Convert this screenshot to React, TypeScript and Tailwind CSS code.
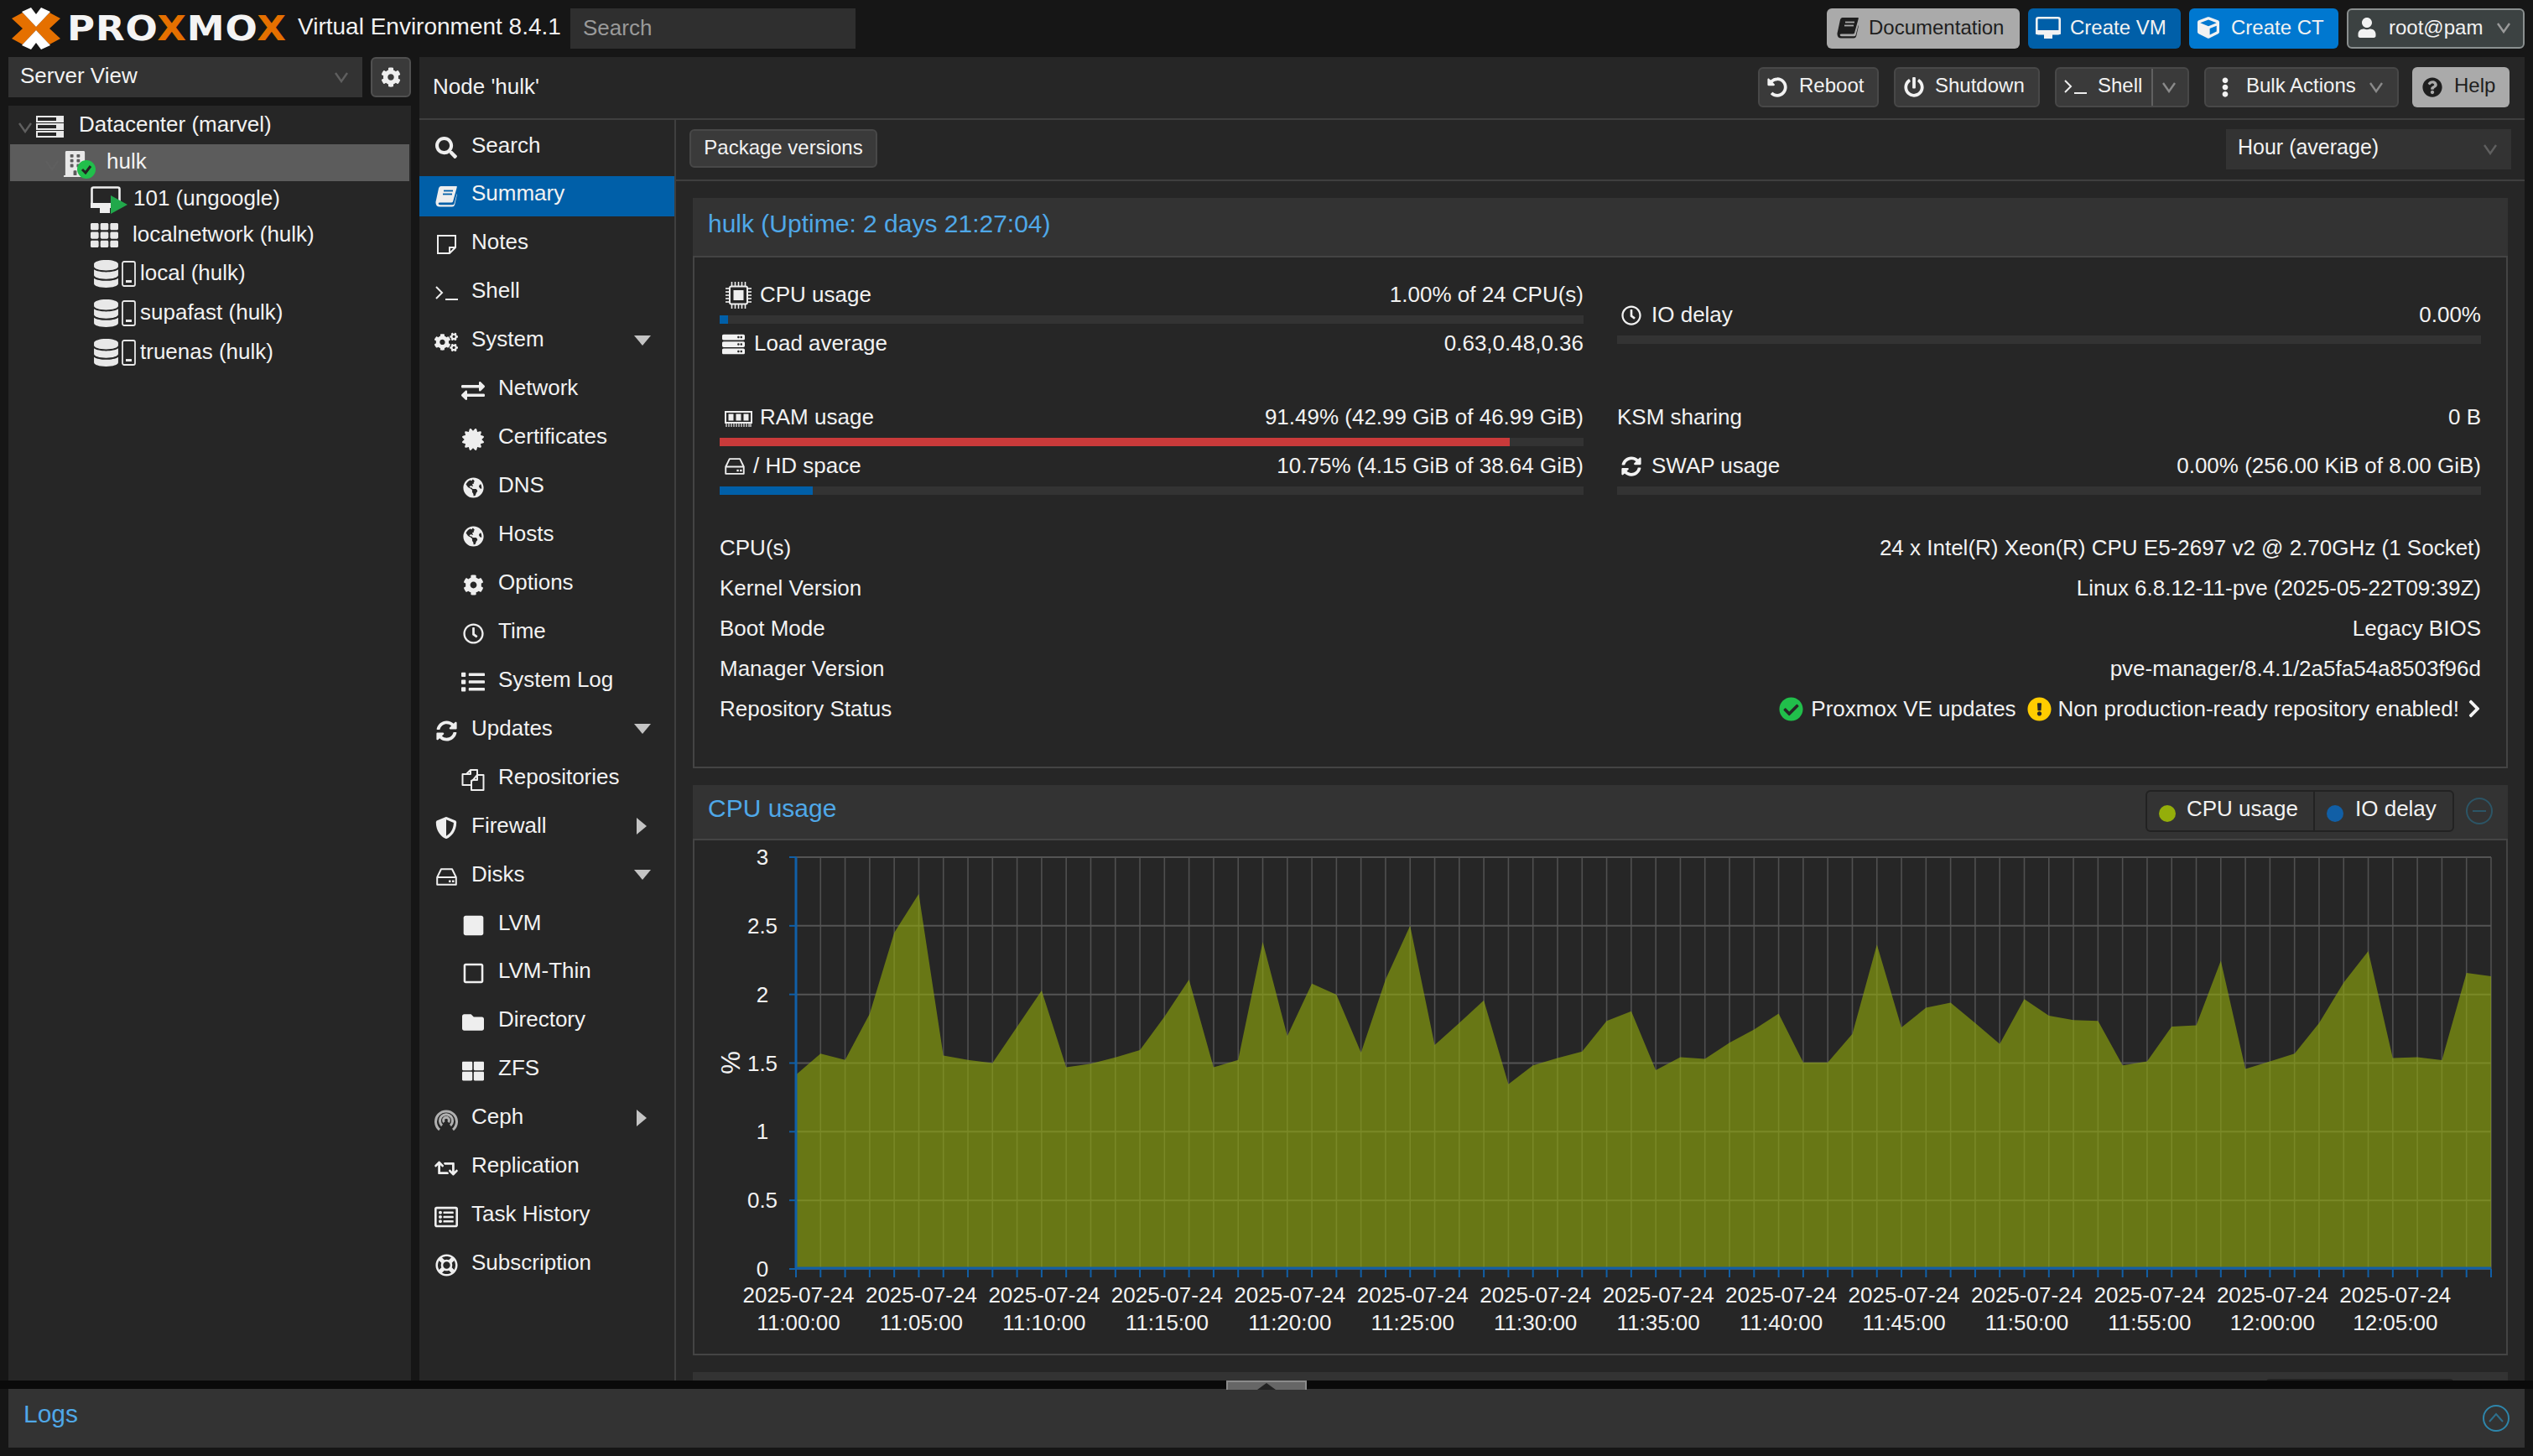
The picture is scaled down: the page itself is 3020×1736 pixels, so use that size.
import React from "react";
import {
  FaSearch, FaCogs, FaExchangeAlt, FaCertificate, FaGlobeAmericas, FaCog,
  FaRegClock, FaList, FaSyncAlt, FaShieldAlt, FaSquare, FaRegSquare, FaFolder, FaThLarge,
  FaRetweet, FaRegListAlt, FaRegLifeRing, FaCube, FaUser, FaUndoAlt, FaPowerOff, FaEllipsisV,
  FaQuestionCircle, FaBuilding, FaTh, FaDatabase, FaCheckCircle, FaExclamationCircle, FaChevronRight,
  FaServer,
} from "react-icons/fa";

function Chev({ c = "#9a9a9a" }: { c?: string }) {
  return (
    <svg width="18" height="14" viewBox="0 0 18 14" className="shrink-0">
      <polyline points="2,2 9,12 16,2" fill="none" stroke={c} strokeWidth="2.4" />
    </svg>
  );
}

function BookIcon({ c = "#eeeeee", bg = "#005fa8", size = 26 }: { c?: string; bg?: string; size?: number }) {
  return (
    <svg width={size} height={size} viewBox="0 0 26 25">
      <path
        d="M6.5 0.5 H25.5 Q26 0.5 25.7 2 L21 19 Q20.5 20 19 20 H5.5 Q3.5 20 3.7 21.3 Q4 22.8 6 22.8 H20.5 Q22 22.8 22.5 21.5 L25.8 9 V11 L23.2 22.5 Q22.5 25 20 25 H5 Q1 25 0.5 20.5 Q0.3 19 1 17 L4 3 Q4.6 0.5 6.5 0.5 Z"
        fill={c}
      />
      <line x1="10" x2="21" y1="6" y2="6" stroke={bg} strokeWidth="1.8" />
      <line x1="9" x2="20" y1="10" y2="10" stroke={bg} strokeWidth="1.8" />
    </svg>
  );
}

function SummaryBook() {
  return <BookIcon />;
}

function NoteIcon() {
  return (
    <svg width="25" height="25" viewBox="0 0 25 25">
      <path d="M2 2 H23 V16 L16 23 H2 Z M23 16 H16 V23" fill="none" stroke="#eeeeee" strokeWidth="2" />
    </svg>
  );
}

function TermIcon() {
  return (
    <svg width="27" height="17" viewBox="0 0 27 17">
      <polyline points="1,1 8,8 1,15" fill="none" stroke="#eeeeee" strokeWidth="2" />
      <line x1="12" x2="27" y1="16" y2="16" stroke="#eeeeee" strokeWidth="2" />
    </svg>
  );
}

function HddIcon({ w = 25, h = 21 }: { w?: number; h?: number }) {
  return (
    <svg width={w} height={h} viewBox="0 0 25 21">
      <path d="M6 1.2 H19 L23.8 11 V19.8 H1.2 V11 Z M1.2 11 H23.8" fill="none" stroke="#eeeeee" strokeWidth="2" strokeLinejoin="round" />
      <rect x="15" y="14.5" width="2.5" height="2.5" fill="#eeeeee" />
      <rect x="19" y="14.5" width="2.5" height="2.5" fill="#eeeeee" />
    </svg>
  );
}

function FilesIcon() {
  return (
    <svg width="28" height="27" viewBox="0 0 28 27">
      <g fill="none" stroke="#eeeeee" strokeWidth="2" strokeLinejoin="round">
        <path d="M6 7 L11 2 H19 V8 M11 2 V7 H6 M6 7 H1.5 V20 H12" />
        <path d="M14 14 L19 8 H26.5 V26 H12 V15 Z M19 8 V14 H13" />
      </g>
    </svg>
  );
}

function ChipIcon() {
  return (
    <svg width="33" height="32" viewBox="0 0 33 32">
      <rect x="6" y="5.5" width="21" height="21" rx="2" fill="none" stroke="#eeeeee" strokeWidth="2" />
      <rect x="10.5" y="10" width="12" height="12" fill="#eeeeee" />
      <g stroke="#eeeeee" strokeWidth="1.6">
        {[9, 13, 17, 21, 25].map((p) => (
          <g key={p}>
            <line x1={p - 0.5} x2={p - 0.5} y1="0" y2="5" />
            <line x1={p - 0.5} x2={p - 0.5} y1="27" y2="32" />
            <line x1="1" x2="6" y1={p - 1} y2={p - 1} />
            <line x1="27" x2="32" y1={p - 1} y2={p - 1} />
          </g>
        ))}
      </g>
    </svg>
  );
}

function RamIcon() {
  return (
    <svg width="33" height="19" viewBox="0 0 33 19">
      <rect x="1" y="1" width="31" height="13" fill="none" stroke="#eeeeee" strokeWidth="2" />
      <rect x="4.5" y="3.5" width="6" height="8" fill="#eeeeee" />
      <rect x="13.5" y="3.5" width="6" height="8" fill="#eeeeee" />
      <rect x="22.5" y="3.5" width="6" height="8" fill="#eeeeee" />
      <g stroke="#eeeeee" strokeWidth="1.2">
        {[2, 5, 8, 11, 14, 17, 20, 23, 26, 29, 31].map((p) => (
          <line key={p} x1={p} x2={p} y1="14" y2="19" />
        ))}
      </g>
    </svg>
  );
}

function VmIcon() {
  return (
    <svg width="30" height="27" viewBox="0 0 30 27" className="shrink-0">
      <rect x="1.3" y="1.3" width="27.4" height="19" rx="2" fill="none" stroke="#f2f2f2" strokeWidth="2.6" />
      <rect x="0" y="16" width="30" height="5" rx="1" fill="#f2f2f2" />
      <rect x="10" y="21" width="10" height="5" fill="#f2f2f2" />
    </svg>
  );
}

function Logo() {
  return (
    <div className="flex items-center w-[355px] shrink-0 pl-[14px]">
      <svg width="58" height="50" viewBox="14 8 58 50" className="shrink-0">
        <polygon points="14,21 27,14 45,33 27,52 14,45 27,33" fill="#e57000" />
        <polygon points="72,21 59,14 41,33 59,52 72,45 59,33" fill="#e57000" />
        <polygon points="26,13 37,8 43,16 49,8 60,13 43,31" fill="#ffffff" />
        <polygon points="26,53 37,58 43,50 49,58 60,53 43,35" fill="#ffffff" />
      </svg>
      <span className="ml-[8px] inline-block origin-left scale-x-[1.1] [font-family:'DejaVu_Sans',sans-serif] font-bold text-[41px] leading-[41px] tracking-[0.8px] text-[#f4f4f4] whitespace-nowrap">
        PRO<span className="text-[#e57000]">X</span>MO<span className="text-[#e57000]">X</span>
      </span>
    </div>
  );
}

function TopBar() {
  return (
    <div className="h-[68px] flex items-center pr-[10px] shrink-0">
      <Logo />
      <span className="text-[28px] text-[#f2f2f2] whitespace-nowrap w-[325px] pb-[4px]">Virtual Environment 8.4.1</span>
      <div className="w-[340px] h-[48px] bg-[#2f2f2f] flex items-center pl-[15px] text-[26px] text-[#9a9a9a] pb-[2px]">Search</div>
      <div className="ml-auto flex gap-[10px] text-[24px]">
        <div className="w-[230px] h-[48px] rounded-[6px] bg-[#aaaaaa] text-[#1e1e1e] flex items-center pl-[12px] gap-[12px] pb-[2px]">
          <BookIcon c="#1e1e1e" bg="#aaaaaa" /> Documentation
        </div>
        <div className="w-[182px] h-[48px] rounded-[6px] bg-[#005fa8] text-[#f2f2f2] flex items-center pl-[9px] gap-[11px] pb-[2px]">
          <VmIcon /> Create VM
        </div>
        <div className="w-[178px] h-[48px] rounded-[6px] bg-[#0078d0] text-[#f2f2f2] flex items-center pl-[10px] gap-[14px] pb-[2px]">
          <FaCube size={26} /> Create CT
        </div>
        <div className="w-[212px] h-[48px] rounded-[6px] bg-[#3c4242] border-2 border-[#8a8f8f] text-[#f2f2f2] flex items-center pl-[10px] pb-[2px]">
          <FaUser size={24} />
          <span className="ml-[14px] w-[128px]">root@pam</span>
          <Chev />
        </div>
      </div>
    </div>
  );
}

function DbIcon() {
  return (
    <div className="flex items-center w-[52px] shrink-0">
      <FaDatabase size={33} color="#e8e8e8" />
      <svg width="17" height="31" viewBox="0 0 17 31" className="ml-[2px]">
        <rect x="1" y="1" width="15" height="29" rx="2" fill="none" stroke="#e8e8e8" strokeWidth="1.8" />
        <rect x="5" y="23" width="7" height="3" fill="#e8e8e8" />
      </svg>
    </div>
  );
}

function TreeRow({ h, pl, active, chev, icon, gap, tp = 3, children }: any) {
  return (
    <div
      className={`flex items-center mx-[2px] ${active ? "bg-[#5c5c5c]" : ""}`}
      style={{ height: h, paddingLeft: pl }}
    >
      {chev && <span className="mr-[4px] mt-[6px] flex"><Chev c="#5f5f5f" /></span>}
      {icon}
      <span className="whitespace-nowrap" style={{ marginLeft: gap, paddingBottom: tp }}>{children}</span>
    </div>
  );
}

function LeftColumn() {
  return (
    <div className="w-[480px] shrink-0 flex flex-col">
      <div className="flex h-[48px] justify-between">
        <div className="w-[422px] h-[48px] bg-[#333333] flex items-center pl-[14px] pr-[16px] justify-between">
          <span className="pb-[4px]">Server View</span>
          <Chev c="#5f5f5f" />
        </div>
        <div className="w-[48px] h-[48px] rounded-[6px] bg-[#3a3a3a] border-2 border-[#505050] flex items-center justify-center">
          <FaCog size={24} color="#eeeeee" />
        </div>
      </div>
      <div className="mt-[10px] flex-1 bg-[#262626] text-[26px]">
        <TreeRow
          h={46}
          pl={9}
          chev
          gap={18}
          tp={1}
          icon={
            <svg width="33" height="26" viewBox="0 0 33 26" className="shrink-0 mt-[4px]">
              <g fill="none" stroke="#e8e8e8" strokeWidth="2">
                <rect x="1" y="1" width="31" height="6" />
                <rect x="1" y="10" width="31" height="6" />
                <rect x="1" y="19" width="31" height="6" />
              </g>
              <rect x="24" y="1" width="8" height="6" fill="#e8e8e8" />
              <rect x="24" y="10" width="8" height="6" fill="#e8e8e8" />
              <rect x="24" y="19" width="8" height="6" fill="#e8e8e8" />
            </svg>
          }
        >
          Datacenter (marvel)
        </TreeRow>
        <TreeRow
          h={44}
          pl={41}
          active
          chev
          gap={20}
          icon={
            <div className="relative w-[32px] h-[32px] shrink-0 mt-[4px] -ml-[1px] mr-[1px]">
              <FaBuilding size={31} color="#e8e8e8" />
              <div className="absolute left-[18px] top-[11px] w-[22px] h-[22px] rounded-full bg-[#21bf4b] flex items-center justify-center">
                <svg width="14" height="12" viewBox="0 0 14 12"><polyline points="2,6 6,10 12,2" fill="none" stroke="#222222" strokeWidth="3" /></svg>
              </div>
            </div>
          }
        >
          hulk
        </TreeRow>
        <TreeRow
          h={42}
          pl={96}
          gap={7}
          tp={2}
          icon={
            <svg width="44" height="34" viewBox="0 0 44 34" className="shrink-0 mt-[4px]">
              <rect x="1.5" y="1.5" width="33" height="22" rx="2" fill="none" stroke="#eeeeee" strokeWidth="2.6" />
              <rect x="0" y="20" width="24" height="6" fill="#eeeeee" />
              <rect x="11" y="26" width="12" height="6" fill="#eeeeee" />
              <polygon points="24,11 44,22 24,33" fill="#21a84b" />
            </svg>
          }
        >
          101 (ungoogle)
        </TreeRow>
        <TreeRow h={45} pl={96} gap={17} icon={<FaTh size={33} color="#e8e8e8" />}>
          localnetwork (hulk)
        </TreeRow>
        <TreeRow h={47} pl={98} gap={5} icon={<DbIcon />}>local (hulk)</TreeRow>
        <TreeRow h={47} pl={98} gap={5} tp={2} icon={<DbIcon />}>supafast (hulk)</TreeRow>
        <TreeRow h={47} pl={98} gap={5} tp={2} icon={<DbIcon />}>truenas (hulk)</TreeRow>
      </div>
    </div>
  );
}

function CephIcon() {
  return (
    <svg width="28" height="28" viewBox="0 0 28 28">
      <g fill="none" stroke="#b0b0b0" strokeWidth="3">
        <path d="M6,26 A12.5,12.5 0 1 1 22,26" />
        <path d="M9,21 A7.6,7.6 0 1 1 19,21" />
        <path d="M11.5,17 A3.4,3.4 0 1 1 16.5,17" />
      </g>
    </svg>
  );
}

const HddMenu = () => <HddIcon />;

const menu: { t: string; I: any; s?: number; sub?: boolean; active?: boolean; arrow?: "down" | "right" }[] = [
  { t: "Search", I: FaSearch, s: 26 },
  { t: "Summary", I: SummaryBook, active: true },
  { t: "Notes", I: NoteIcon },
  { t: "Shell", I: TermIcon },
  { t: "System", I: FaCogs, s: 30, arrow: "down" },
  { t: "Network", I: FaExchangeAlt, s: 28, sub: true },
  { t: "Certificates", I: FaCertificate, s: 26, sub: true },
  { t: "DNS", I: FaGlobeAmericas, s: 25, sub: true },
  { t: "Hosts", I: FaGlobeAmericas, s: 25, sub: true },
  { t: "Options", I: FaCog, s: 25, sub: true },
  { t: "Time", I: FaRegClock, s: 25, sub: true },
  { t: "System Log", I: FaList, s: 28, sub: true },
  { t: "Updates", I: FaSyncAlt, s: 25, arrow: "down" },
  { t: "Repositories", I: FilesIcon, sub: true },
  { t: "Firewall", I: FaShieldAlt, s: 26, arrow: "right" },
  { t: "Disks", I: HddMenu, arrow: "down" },
  { t: "LVM", I: FaSquare, s: 27, sub: true },
  { t: "LVM-Thin", I: FaRegSquare, s: 27, sub: true },
  { t: "Directory", I: FaFolder, s: 26, sub: true },
  { t: "ZFS", I: FaThLarge, s: 26, sub: true },
  { t: "Ceph", I: CephIcon, arrow: "right" },
  { t: "Replication", I: FaRetweet, s: 30 },
  { t: "Task History", I: FaRegListAlt, s: 28 },
  { t: "Subscription", I: FaRegLifeRing, s: 27 },
];

function Menu() {
  return (
    <div className="w-[306px] shrink-0 border-r-2 border-[#3f3f3f] flex flex-col gap-[9.95px] pt-[9px] text-[26px] overflow-hidden">
      {menu.map((m) => (
        <div
          key={m.t}
          className={`flex items-center h-[48px] shrink-0 gap-[16px] ${m.active ? "bg-[#005fa8]" : ""} ${m.sub ? "pl-[50px]" : "pl-[18px]"}`}
        >
          <span className="w-[28px] flex justify-center text-[#eeeeee]">
            <m.I size={m.s} />
          </span>
          <span className="pb-[6px]">{m.t}</span>
          {m.arrow === "down" && (
            <svg width="20" height="12" viewBox="0 0 20 12" className="ml-auto mr-[28px] mb-[4px]">
              <polygon points="0,0 20,0 10,12" fill="#c4c4c4" />
            </svg>
          )}
          {m.arrow === "right" && (
            <svg width="12" height="20" viewBox="0 0 12 20" className="ml-auto mr-[33px] mb-[4px]">
              <polygon points="0,0 12,10 0,20" fill="#c4c4c4" />
            </svg>
          )}
        </div>
      ))}
    </div>
  );
}

function Bar({ pct, c }: { pct: number; c?: string }) {
  return (
    <div className="h-[10px] mt-[6px] bg-[#333333]">
      {pct > 0 && <div className="h-full" style={{ width: `${pct}%`, background: c ?? "#005fa8" }} />}
    </div>
  );
}

function Stat({ icon, label, value, pct, c, gap = 8 }: any) {
  return (
    <div className="h-[58px]">
      <div className="h-[36px] flex items-center justify-between">
        <div className="flex items-center">
          {icon}
          <span className="pb-[2px]" style={{ marginLeft: gap }}>{label}</span>
        </div>
        <span className="pb-[2px]">{value}</span>
      </div>
      {pct !== undefined && <Bar pct={pct} c={c} />}
    </div>
  );
}

function InfoRow({ k, children }: { k: string; children: React.ReactNode }) {
  return (
    <div className="h-[48px] flex items-center justify-between">
      <span className="pb-[2px]">{k}</span>
      <div className="flex items-center pb-[2px]">{children}</div>
    </div>
  );
}

function SummaryPanel() {
  return (
    <div className="h-[680px] shrink-0 flex flex-col">
      <div className="h-[71px] bg-[#333333] border-b-2 border-[#444444] flex items-center pl-[18px] text-[30px] text-[#4fa8e8] pb-[8px]">
        hulk (Uptime: 2 days 21:27:04)
      </div>
      <div className="flex-1 border-2 border-t-0 border-[#444444] px-[30px] pt-[27px] text-[#f2f2f2] text-[26px]">
        <div className="grid grid-cols-2 gap-x-[40px]">
          <div className="h-[146px]">
            <Stat icon={<span className="ml-[6px] flex"><ChipIcon /></span>} label="CPU usage" value="1.00% of 24 CPU(s)" pct={1} gap={9} />
            <Stat icon={<span className="ml-[3px]"><FaServer size={27} /></span>} label="Load average" value="0.63,0.48,0.36" gap={11} />
          </div>
          <div className="h-[146px] pt-[24px]">
            <Stat icon={<span className="ml-[5px]"><FaRegClock size={24} /></span>} label="IO delay" value="0.00%" pct={0} gap={12} />
          </div>
          <div>
            <Stat icon={<span className="ml-[6px] mt-[2px] flex"><RamIcon /></span>} label="RAM usage" value="91.49% (42.99 GiB of 46.99 GiB)" pct={91.49} c="#c93a3a" gap={9} />
            <Stat icon={<span className="ml-[6px] flex"><HddIcon w={24} h={20} /></span>} label="/ HD space" value="10.75% (4.15 GiB of 38.64 GiB)" pct={10.75} gap={10} />
          </div>
          <div>
            <Stat icon={null} label="KSM sharing" value="0 B" gap={0} />
            <Stat icon={<span className="ml-[5px]"><FaSyncAlt size={24} /></span>} label="SWAP usage" value="0.00% (256.00 KiB of 8.00 GiB)" pct={0} gap={12} />
          </div>
        </div>
        <div className="mt-[34px]">
          <InfoRow k="CPU(s)">24 x Intel(R) Xeon(R) CPU E5-2697 v2 @ 2.70GHz (1 Socket)</InfoRow>
          <InfoRow k="Kernel Version">Linux 6.8.12-11-pve (2025-05-22T09:39Z)</InfoRow>
          <InfoRow k="Boot Mode">Legacy BIOS</InfoRow>
          <InfoRow k="Manager Version">pve-manager/8.4.1/2a5fa54a8503f96d</InfoRow>
          <InfoRow k="Repository Status">
            <FaCheckCircle size={29} color="#21bf4b" />
            <span className="ml-[9px]">Proxmox VE updates</span>
            <span className="ml-[13px]"><FaExclamationCircle size={29} color="#ffcc00" /></span>
            <span className="ml-[8px]">Non production-ready repository enabled!</span>
            <span className="ml-[6px] -mr-[4px] flex"><FaChevronRight size={24} /></span>
          </InfoRow>
        </div>
      </div>
    </div>
  );
}

const rawA = [735, 678, 695, 570, 350, 245, 683, 695, 703, 605, 507, 715, 705, 688, 668, 578, 477, 715, 695, 375, 630, 488, 518, 675];
const rawB = [480, 357, 630, 580, 528, 720, 677, 660, 645, 575, 553, 688, 658, 662, 625, 595, 558, 670, 670, 605, 400, 590, 545, 533, 580, 628, 525, 563, 573, 575, 677, 668, 588, 585, 437, 685, 668, 650, 580, 487, 415, 660, 658, 665, 465, 473];
const data = [...rawA.map((z) => z / 2.2725 + 960), ...rawB.map((z) => z / 1.9216 + 920)];
const X0 = 949;
const STEP = (2970 - 949) / 69;
const Y0 = 1515;
const YSTEP = 491 / 6;

function Chart() {
  const pts = data.map((y, i) => `${(X0 + i * STEP).toFixed(1)},${y.toFixed(1)}`).join(" ");
  const area = `${X0},1513 ${pts} 2970,1513`;
  const yLabels = ["0", "0.5", "1", "1.5", "2", "2.5", "3"];
  const xs = Array.from({ length: 70 }, (_, i) => X0 + i * STEP);
  return (
    <svg width="2160" height="612" viewBox="828 1004 2160 612" className="block" fontSize="26" fill="#f2f2f2">
      {xs.map((x, i) => (
        <line key={i} x1={x} x2={x} y1={1024} y2={1515} stroke="#505050" strokeWidth="1.6" />
      ))}
      {yLabels.map((l, i) => (
        <g key={l}>
          <line x1={949} x2={2970} y1={Y0 - i * YSTEP} y2={Y0 - i * YSTEP} stroke="#545454" strokeWidth="2" />
          <line x1={941} x2={949} y1={Y0 - i * YSTEP} y2={Y0 - i * YSTEP} stroke="#115fa6" strokeWidth="2" />
          <text x={909} y={Y0 - i * YSTEP + 9} textAnchor="middle">{l}</text>
        </g>
      ))}
      <polygon points={area} fill="#94ae0a" fillOpacity="0.6" />
      <line x1={949} x2={2970} y1={1514} y2={1514} stroke="#115fa6" strokeWidth="3" />
      <line x1={949} x2={949} y1={1024} y2={1515} stroke="#115fa6" strokeWidth="3" />
      {xs.map((x, i) => (
        <line key={i} x1={x} x2={x} y1={1515} y2={1525} stroke="#115fa6" strokeWidth="2" />
      ))}
      {Array.from({ length: 14 }, (_, k) => {
        const x = X0 + k * 5 * STEP + 3;
        const total = k * 5;
        const h = 11 + Math.floor(total / 60);
        const m = total % 60;
        const time = `${h}:${String(m).padStart(2, "0")}:00`;
        return (
          <g key={k} textAnchor="middle">
            <text x={x} y={1555}>2025-07-24</text>
            <text x={x} y={1588}>{time}</text>
          </g>
        );
      })}
      <text x={871} y={1280} fontSize="31" textAnchor="middle" transform="rotate(-90 871 1269)">%</text>
    </svg>
  );
}

function ToolCircle({ up }: { up?: boolean }) {
  return (
    <svg width="34" height="34" viewBox="0 0 34 34" className="shrink-0">
      <circle cx="17" cy="17" r="15" fill="none" stroke={up ? "#2e86ab" : "#2c5566"} strokeWidth="2" />
      {up ? (
        <polyline points="9,21 17,12 25,21" fill="none" stroke="#2e6f8c" strokeWidth="2" />
      ) : (
        <line x1="9" x2="25" y1="17" y2="17" stroke="#2c5566" strokeWidth="2" />
      )}
    </svg>
  );
}

function ChartPanel() {
  return (
    <div className="h-[680px] shrink-0 flex flex-col">
      <div className="h-[66px] bg-[#333333] border-b-2 border-[#444444] flex items-center pl-[18px] pr-[17px] justify-between text-[#4fa8e8]">
        <span className="text-[30px] pb-[9px]">CPU usage</span>
        <div className="flex items-center gap-[13px] pb-[2px]">
          <div className="h-[50px] w-[368px] bg-[#333333] border-2 border-[#222222] rounded-[6px] flex text-[26px] text-[#f2f2f2]">
            <div className="w-[200px] border-r-2 border-[#222222] flex items-center pl-[14px] gap-[13px]">
              <span className="w-[20px] h-[20px] rounded-full bg-[#94ae0a] mt-[6px]" />
              <span className="pb-[6px]">CPU usage</span>
            </div>
            <div className="flex-1 flex items-center pl-[14px] gap-[14px]">
              <span className="w-[20px] h-[20px] rounded-full bg-[#115fa6] mt-[6px]" />
              <span className="pb-[6px]">IO delay</span>
            </div>
          </div>
          <ToolCircle />
        </div>
      </div>
      <div className="flex-1 border-2 border-t-0 border-[#444444] overflow-hidden">
        <Chart />
      </div>
    </div>
  );
}

function ToolBtn({ w, children }: { w: string; children: React.ReactNode }) {
  return (
    <div className={`${w} h-[48px] rounded-[6px] bg-[#3a3a3a] border-2 border-[#484848] flex items-center text-[#f2f2f2]`}>
      {children}
    </div>
  );
}

function Main() {
  return (
    <div className="flex-1 ml-[10px] flex flex-col bg-[#262626] min-w-0">
      <div className="h-[75px] shrink-0 border-b-2 border-[#3f3f3f] flex items-center pl-[16px] pr-[18px] text-[24px]">
        <span className="text-[26px] mb-[2px]">Node 'hulk'</span>
        <div className="ml-auto flex mb-[2px]">
          <ToolBtn w="w-[144px]">
            <span className="ml-[9px]"><FaUndoAlt size={24} /></span>
            <span className="ml-[14px] pb-[4px]">Reboot</span>
          </ToolBtn>
          <span className="w-[18px]" />
          <ToolBtn w="w-[174px]">
            <span className="ml-[10px]"><FaPowerOff size={24} /></span>
            <span className="ml-[13px] pb-[4px]">Shutdown</span>
          </ToolBtn>
          <span className="w-[18px]" />
          <ToolBtn w="w-[160px]">
            <span className="ml-[9px] flex"><TermIcon /></span>
            <span className="ml-[13px] pb-[4px]">Shell</span>
            <span className="ml-[11px] w-[2px] h-[44px] bg-[#606060]" />
            <span className="ml-[10px] flex"><Chev c="#8a8a8a" /></span>
          </ToolBtn>
          <span className="w-[18px]" />
          <ToolBtn w="w-[232px]">
            <span className="ml-[11px]"><FaEllipsisV size={24} /></span>
            <span className="ml-[13px] pb-[4px]">Bulk Actions</span>
            <span className="ml-[15px] flex"><Chev c="#8a8a8a" /></span>
          </ToolBtn>
          <span className="w-[16px]" />
          <div className="w-[116px] h-[48px] rounded-[6px] bg-[#aaaaaa] flex items-center text-[#1e1e1e]">
            <span className="ml-[12px]"><FaQuestionCircle size={24} /></span>
            <span className="ml-[14px] pb-[4px]">Help</span>
          </div>
        </div>
      </div>
      <div className="flex-1 flex min-h-0">
        <Menu />
        <div className="flex-1 min-w-0 flex flex-col overflow-hidden">
          <div className="h-[73px] shrink-0 border-b-2 border-[#3f3f3f] flex items-center pl-[16px] pr-[16px] justify-between">
            <div className="w-[224px] h-[46px] mb-[3px] rounded-[6px] bg-[#3a3a3a] border-2 border-[#484848] flex items-center justify-center text-[24px] pb-[2px]">
              Package versions
            </div>
            <div className="w-[340px] h-[48px] mb-[1px] bg-[#333333] flex items-center pl-[14px] pr-[16px] justify-between text-[25px]">
              <span className="pb-[4px]">Hour (average)</span>
              <Chev c="#5f5f5f" />
            </div>
          </div>
          <div className="flex-1 flex flex-col gap-[20px] pt-[20px] pl-[20px] pr-[20px] overflow-hidden">
            <SummaryPanel />
            <ChartPanel />
            <div className="h-[60px] shrink-0 bg-[#333333] flex justify-end pt-[8px] pr-[65px]">
              <div className="w-[223px] h-[50px] bg-[#222222] rounded-t-[4px]" />
            </div>
          </div>
        </div>
      </div>
    </div>
  );
}

export default function App() {
  return (
    <div className="relative w-[3020px] h-[1736px] bg-[#161616] text-[26px] text-[#f2f2f2] flex flex-col overflow-hidden [font-family:'Liberation_Sans',Arial,sans-serif]">
      <TopBar />
      <div className="h-[1578px] shrink-0 flex pl-[10px] pr-[10px]">
        <LeftColumn />
        <Main />
      </div>
      <div className="h-[10px] shrink-0 bg-[#0a0a0a]" />
      <div className="h-[70px] shrink-0 ml-[10px] mr-[10px] bg-[#333333] flex items-center justify-between pl-[18px] pr-[17px]">
        <span className="text-[30px] text-[#4fa8e8] pb-[12px]">Logs</span>
        <ToolCircle up />
      </div>
      <div className="absolute left-[1462px] top-[1646px] w-[96px] h-[11px] bg-[#666666] border-t-2 border-x-2 border-[#8a8a8a] flex justify-center items-end">
        <svg width="22" height="8" viewBox="0 0 22 8"><polygon points="11,0 22,8 0,8" fill="#222222" /></svg>
      </div>
    </div>
  );
}
